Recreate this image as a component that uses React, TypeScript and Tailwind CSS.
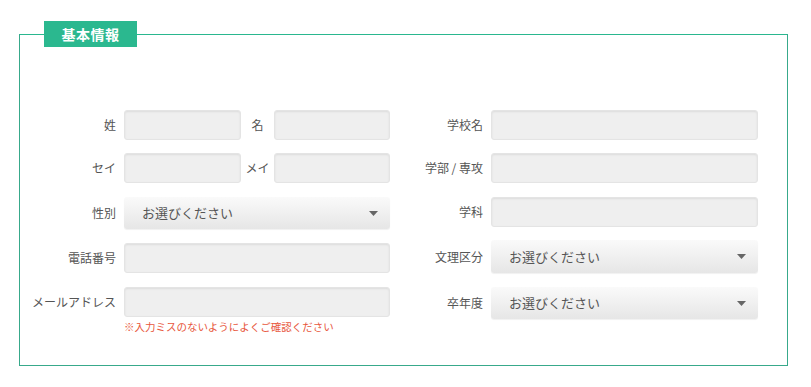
const font = { fontFamily: '"Noto Sans CJK JP", "Noto Sans", sans-serif' }

function TextInput({ className = '' }: { className?: string }) {
  return (
    <input
      type="text"
      className={`h-[30px] rounded-[3px] border border-[#e4e4e4] bg-[#efefef] px-2 text-[13px] text-[#555] shadow-[inset_0_1px_2px_rgba(0,0,0,0.08)] outline-none ${className}`}
    />
  )
}

function Select({ className = '' }: { className?: string }) {
  return (
    <div
      className={`flex items-center justify-between rounded-[3px] bg-gradient-to-b from-[#fafafa] to-[#e6e6e6] pl-[18px] pr-[12px] shadow-[0_1px_1px_rgba(0,0,0,0.06)] ${className}`}
    >
      <span className="text-[13px] text-[#555]">お選びください</span>
      <svg width="9" height="5" viewBox="0 0 9 5">
        <path d="M0 0h9L4.5 5z" fill="#666" />
      </svg>
    </div>
  )
}

function Row({ label, labelWidth, children, className = '' }: { label: string; labelWidth: string; children: React.ReactNode; className?: string }) {
  return (
    <div className={`flex items-center gap-2 ${className}`}>
      <span className={`${labelWidth} shrink-0 text-right text-[12px] text-[#555]`}>{label}</span>
      {children}
    </div>
  )
}

function NamePair({ second }: { second: string }) {
  return (
    <div className="flex items-center">
      <TextInput className="w-[117px]" />
      <span className="w-[33px] text-center text-[12px] text-[#555]">{second}</span>
      <TextInput className="w-[116px]" />
    </div>
  )
}

export default function App() {
  return (
    <div className="bg-white pl-[19px] pt-[34px]" style={font}>
      <div className="h-[332px] w-[769px] border border-[#38a98b] border-t-[#2ab78f]">
        <div className="-mt-[14px] ml-6 h-[26px] w-[93px] bg-[#2bb88f] text-center text-[14px] font-bold leading-[26px] tracking-[0.5px] text-white">
          基本情報
        </div>
        <div className="flex pl-2 pt-[63px]">
          <div className="flex w-[362px] flex-col">
            <Row label="姓" labelWidth="w-[88px]">
              <NamePair second="名" />
            </Row>
            <Row label="セイ" labelWidth="w-[88px]" className="mt-[13px]">
              <NamePair second="メイ" />
            </Row>
            <Row label="性別" labelWidth="w-[88px]" className="mt-[14px]">
              <Select className="h-[32px] w-[266px]" />
            </Row>
            <Row label="電話番号" labelWidth="w-[88px]" className="mt-[14px]">
              <TextInput className="w-[266px]" />
            </Row>
            <Row label="メールアドレス" labelWidth="w-[88px]" className="mt-[14px]">
              <TextInput className="w-[266px]" />
            </Row>
            <p className="ml-[96px] mt-[2px] text-[10.5px] leading-[16px] text-[#e8573d]">
              ※入力ミスのないようによくご確認ください
            </p>
          </div>
          <div className="ml-[10px] flex w-[358px] flex-col">
            <Row label="学校名" labelWidth="w-[83px]">
              <TextInput className="w-[267px]" />
            </Row>
            <Row label="学部 / 専攻" labelWidth="w-[83px]" className="mt-[13px]">
              <TextInput className="w-[267px]" />
            </Row>
            <Row label="学科" labelWidth="w-[83px]" className="mt-[14px]">
              <TextInput className="w-[267px]" />
            </Row>
            <Row label="文理区分" labelWidth="w-[83px]" className="mt-[13px]">
              <Select className="h-[33px] w-[267px]" />
            </Row>
            <Row label="卒年度" labelWidth="w-[83px]" className="mt-[14px]">
              <Select className="h-[32px] w-[267px]" />
            </Row>
          </div>
        </div>
      </div>
    </div>
  )
}
